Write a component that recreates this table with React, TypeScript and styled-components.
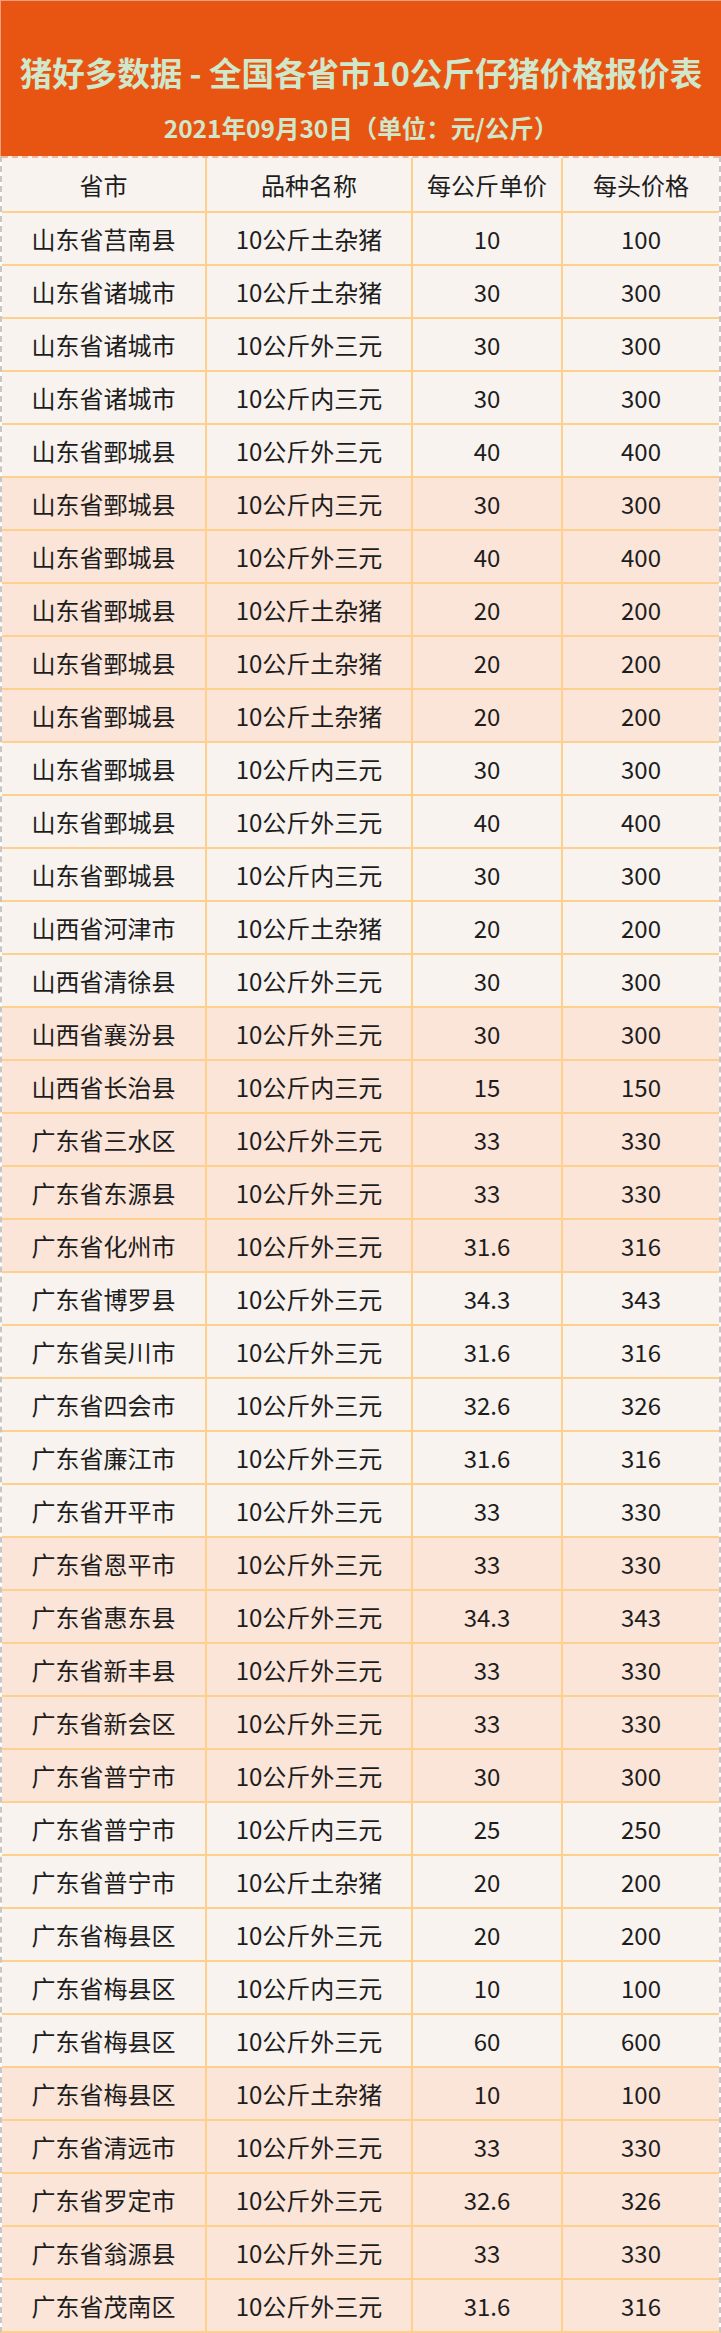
import React from 'react'
import styled, { createGlobalStyle } from 'styled-components'

const GlobalStyle = createGlobalStyle`
  html, body {
    margin: 0;
    padding: 0;
    background: #ffffff;
  }
  body {
    font-family: "Noto Sans CJK SC", "Noto Sans", sans-serif;
  }
`

const Page = styled.div`
  width: 721px;
`

const Banner = styled.header`
  box-sizing: border-box;
  height: 156px;
  padding-top: 50px;
  background: #e85513;
  border-top: 1px solid #f0a07c;
  border-left: 1px solid #f0a07c;
  display: flex;
  flex-direction: column;
  align-items: center;
  gap: 19px;
  color: #cfe8cb;
`

const Title = styled.h1`
  margin: 0;
  font-size: 32.5px;
  line-height: 42px;
  font-weight: 700;
  white-space: nowrap;
`

const Subtitle = styled.div`
  font-size: 24.5px;
  line-height: 32px;
  font-weight: 700;
  white-space: nowrap;
`

const Table = styled.div`
  border-left: 2px dashed #c9c6c4;
  border-right: 2px dashed #c9c6c4;
  border-bottom: 2px solid #fdd08e;
`

const Row = styled.div<{ $pink?: boolean; $head?: boolean }>`
  display: grid;
  grid-template-columns: 203px 206px 150px 158px;
  height: ${p => (p.$head ? '53px' : '51px')};
  background: ${p => (p.$pink ? '#fbe4d8' : '#f8f3ef')};
  border-top: ${p => (p.$head ? '2px dashed #f2b79a' : '2px solid #fdd08e')};
`

const Cell = styled.div<{ $first?: boolean }>`
  display: flex;
  align-items: center;
  justify-content: center;
  font-size: 24px;
  color: #1d1d1d;
  white-space: nowrap;
  border-left: ${p => (p.$first ? 'none' : '2px solid #fdd08e')};
`

type Item = [string, string, string, string]

const rows: Item[] = [
  ['山东省莒南县', '10公斤土杂猪', '10', '100'],
  ['山东省诸城市', '10公斤土杂猪', '30', '300'],
  ['山东省诸城市', '10公斤外三元', '30', '300'],
  ['山东省诸城市', '10公斤内三元', '30', '300'],
  ['山东省鄄城县', '10公斤外三元', '40', '400'],
  ['山东省鄄城县', '10公斤内三元', '30', '300'],
  ['山东省鄄城县', '10公斤外三元', '40', '400'],
  ['山东省鄄城县', '10公斤土杂猪', '20', '200'],
  ['山东省鄄城县', '10公斤土杂猪', '20', '200'],
  ['山东省鄄城县', '10公斤土杂猪', '20', '200'],
  ['山东省鄄城县', '10公斤内三元', '30', '300'],
  ['山东省鄄城县', '10公斤外三元', '40', '400'],
  ['山东省鄄城县', '10公斤内三元', '30', '300'],
  ['山西省河津市', '10公斤土杂猪', '20', '200'],
  ['山西省清徐县', '10公斤外三元', '30', '300'],
  ['山西省襄汾县', '10公斤外三元', '30', '300'],
  ['山西省长治县', '10公斤内三元', '15', '150'],
  ['广东省三水区', '10公斤外三元', '33', '330'],
  ['广东省东源县', '10公斤外三元', '33', '330'],
  ['广东省化州市', '10公斤外三元', '31.6', '316'],
  ['广东省博罗县', '10公斤外三元', '34.3', '343'],
  ['广东省吴川市', '10公斤外三元', '31.6', '316'],
  ['广东省四会市', '10公斤外三元', '32.6', '326'],
  ['广东省廉江市', '10公斤外三元', '31.6', '316'],
  ['广东省开平市', '10公斤外三元', '33', '330'],
  ['广东省恩平市', '10公斤外三元', '33', '330'],
  ['广东省惠东县', '10公斤外三元', '34.3', '343'],
  ['广东省新丰县', '10公斤外三元', '33', '330'],
  ['广东省新会区', '10公斤外三元', '33', '330'],
  ['广东省普宁市', '10公斤外三元', '30', '300'],
  ['广东省普宁市', '10公斤内三元', '25', '250'],
  ['广东省普宁市', '10公斤土杂猪', '20', '200'],
  ['广东省梅县区', '10公斤外三元', '20', '200'],
  ['广东省梅县区', '10公斤内三元', '10', '100'],
  ['广东省梅县区', '10公斤外三元', '60', '600'],
  ['广东省梅县区', '10公斤土杂猪', '10', '100'],
  ['广东省清远市', '10公斤外三元', '33', '330'],
  ['广东省罗定市', '10公斤外三元', '32.6', '326'],
  ['广东省翁源县', '10公斤外三元', '33', '330'],
  ['广东省茂南区', '10公斤外三元', '31.6', '316'],
]

const columns: Item = ['省市', '品种名称', '每公斤单价', '每头价格']

// rows are shaded in bands of five
const isPink = (index: number) => Math.floor(index / 5) % 2 === 1

export default function App() {
  return (
    <Page>
      <GlobalStyle />
      <Banner>
        <Title>猪好多数据 - 全国各省市10公斤仔猪价格报价表</Title>
        <Subtitle>2021年09月30日（单位：元/公斤）</Subtitle>
      </Banner>
      <Table>
        <Row $head>
          {columns.map((c, i) => (
            <Cell key={c} $first={i === 0}>{c}</Cell>
          ))}
        </Row>
        {rows.map((r, i) => (
          <Row key={i} $pink={isPink(i)}>
            {r.map((v, j) => (
              <Cell key={j} $first={j === 0}>{v}</Cell>
            ))}
          </Row>
        ))}
      </Table>
    </Page>
  )
}
